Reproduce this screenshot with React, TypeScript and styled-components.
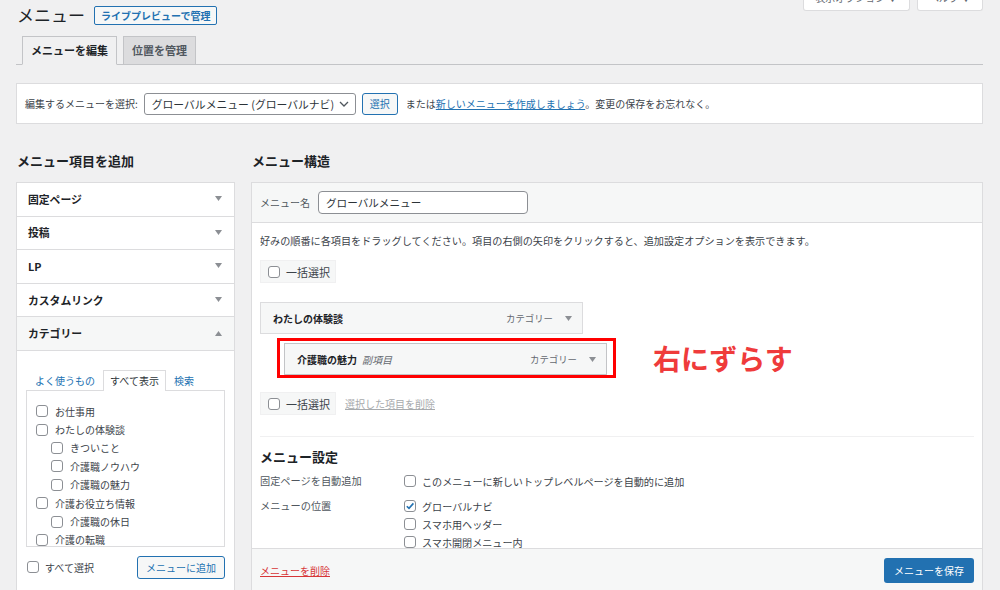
import styled, { createGlobalStyle } from "styled-components";

const GlobalStyle = createGlobalStyle`
  body {
    margin: 0;
    background: #f0f0f1;
    font-family: "Noto Sans CJK JP", "Noto Sans", sans-serif;
    color: #3c434a;
    overflow: hidden;
  }
  * {
    box-sizing: border-box;
  }
`;

const Page = styled.div`
  height: 590px;
  overflow: hidden;
  padding: 0 17px 0 16px;
`;

const Header = styled.div`
  display: flex;
  align-items: center;
  height: 30px;
  padding-left: 1px;
`;

const Title = styled.h1`
  margin: 0;
  font-size: 17px;
  font-weight: 400;
  line-height: 28px;
  color: #1d2327;
`;

const LiveButton = styled.span`
  margin-left: 9px;
  height: 19px;
  padding: 0 6px;
  border: 1px solid #2271b1;
  border-radius: 2px;
  background: #f6f7f7;
  color: #2271b1;
  font-size: 10px;
  font-weight: 600;
  line-height: 17px;
`;

const ScreenMeta = styled.div`
  display: flex;
  gap: 7px;
  margin-left: auto;
  align-self: flex-start;
  margin-top: -10px;
`;

const MetaButton = styled.span<{ $w: number }>`
  width: ${(p) => p.$w}px;
  height: 21px;
  border: 1px solid #dcdcde;
  border-top: none;
  border-radius: 0 0 3px 3px;
  background: #fff;
  color: #646970;
  font-size: 10px;
  line-height: 16px;
  text-align: center;
`;

const TabRow = styled.div`
  display: flex;
  gap: 6px;
  margin-top: 6px;
  padding-left: 6px;
  border-bottom: 1px solid #c3c4c7;
`;

const Tab = styled.span<{ $active?: boolean }>`
  height: 29px;
  margin-bottom: -1px;
  padding: 0 8px;
  border: 1px solid #c3c4c7;
  border-bottom-color: ${(p) => (p.$active ? "#f0f0f1" : "#c3c4c7")};
  background: ${(p) => (p.$active ? "#f0f0f1" : "#dcdcde")};
  color: ${(p) => (p.$active ? "#1d2327" : "#50575e")};
  font-size: 11px;
  font-weight: 700;
  line-height: 27px;
`;

const SelectBar = styled.div`
  display: flex;
  align-items: center;
  height: 41px;
  margin-top: 18px;
  padding: 0 8px;
  background: #fff;
  border: 1px solid #dcdcde;
  font-size: 10px;
  color: #3c434a;
`;

const FakeSelect = styled.div`
  display: flex;
  align-items: center;
  justify-content: space-between;
  width: 212px;
  height: 22px;
  margin-left: 6px;
  padding: 0 6px 0 7px;
  border: 1px solid #8c8f94;
  border-radius: 3px;
  color: #2c3338;
  font-size: 10.8px;
`;

const SecondaryButton = styled.span<{ $w?: number; $h?: number }>`
  display: inline-flex;
  align-items: center;
  justify-content: center;
  width: ${(p) => (p.$w ? `${p.$w}px` : "auto")};
  height: ${(p) => p.$h ?? 22}px;
  border: 1px solid #2271b1;
  border-radius: 3px;
  background: #f6f7f7;
  color: #2271b1;
  font-size: 10px;
`;

const Link = styled.a<{ $color?: string }>`
  color: ${(p) => p.$color ?? "#2271b1"};
  text-decoration: underline;
`;

const Columns = styled.div`
  display: flex;
  gap: 16px;
  margin-top: 27px;
`;

const LeftCol = styled.div`
  width: 219px;
  flex-shrink: 0;
`;

const RightCol = styled.div`
  flex: 1;
`;

const Heading = styled.h2`
  margin: 0 0 11px 1px;
  font-size: 13px;
  font-weight: 700;
  line-height: 20px;
  color: #1d2327;
`;

const Accordion = styled.div`
  background: #fff;
  border: 1px solid #dcdcde;
`;

const AccRow = styled.div<{ $open?: boolean }>`
  display: flex;
  align-items: center;
  justify-content: space-between;
  height: 33.6px;
  padding: 0 12px 1px 11px;
  border-bottom: 1px solid #dcdcde;
  background: ${(p) => (p.$open ? "#f6f7f7" : "#fff")};
  color: #1d2327;
  font-size: 10.8px;
  font-weight: 700;
`;

const AccBody = styled.div`
  padding: 19px 9px 0 9px;
  height: 260px;
`;

const CatTabs = styled.div`
  display: flex;
  align-items: flex-end;
  gap: 7px;
  padding-left: 8px;
  font-size: 10px;
`;

const CatTab = styled.span<{ $active?: boolean }>`
  position: relative;
  height: 21px;
  margin-bottom: -1px;
  padding: 0 ${(p) => (p.$active ? "6px" : "0")};
  border: ${(p) => (p.$active ? "1px solid #dcdcde" : "1px solid transparent")};
  border-bottom: none;
  background: ${(p) => (p.$active ? "#fff" : "transparent")};
  color: ${(p) => (p.$active ? "#2c3338" : "#2271b1")};
  line-height: 20px;
`;

const CatList = styled.div`
  height: 157px;
  padding: 11px 0 0 9px;
  border: 1px solid #dcdcde;
  overflow: hidden;
`;

const CheckRow = styled.label<{ $level?: number; $h?: number; $size?: number; $gap?: number }>`
  display: flex;
  align-items: center;
  gap: ${(p) => p.$gap ?? 7}px;
  height: ${(p) => p.$h ?? 18.4}px;
  padding-left: ${(p) => (p.$level ?? 0) * 15}px;
  font-size: ${(p) => p.$size ?? 10}px;
  color: #3c434a;
`;

const Box = styled.span`
  display: inline-flex;
  align-items: center;
  justify-content: center;
  width: 12px;
  height: 12px;
  flex-shrink: 0;
  border: 1px solid #8c8f94;
  border-radius: 3px;
  background: #fff;
`;

const AddRow = styled.div`
  display: flex;
  align-items: center;
  justify-content: space-between;
  margin-top: 9px;
  padding-left: 1px;
`;

const StructBox = styled.div`
  background: #fff;
  border: 1px solid #dcdcde;
`;

const StructHeader = styled.div`
  display: flex;
  align-items: center;
  gap: 8px;
  height: 40px;
  padding: 0 8px;
  background: #f6f7f7;
  border-bottom: 1px solid #dcdcde;
  font-size: 10px;
  color: #50575e;
`;

const NameInput = styled.div`
  width: 210px;
  height: 23px;
  padding: 0 7px;
  border: 1px solid #8c8f94;
  border-radius: 4px;
  background: #fff;
  color: #2c3338;
  font-size: 10.6px;
  line-height: 21px;
`;

const StructBody = styled.div`
  height: 325px;
  padding: 8px 8px 0 8px;
  overflow: hidden;
`;

const Instruction = styled.p`
  margin: 0;
  font-size: 10.15px;
  line-height: 20px;
  color: #3c434a;
`;

const BulkRow = styled.div<{ $mt: number }>`
  display: flex;
  align-items: center;
  gap: 9px;
  margin-top: ${(p) => p.$mt}px;
  font-size: 10px;
`;

const BulkButton = styled.span`
  display: flex;
  align-items: center;
  gap: 6px;
  width: 76px;
  height: 23px;
  padding-left: 7px;
  background: #f6f7f7;
  border: 1px solid #f0f0f1;
  font-size: 11px;
  color: #3c434a;
`;

const MenuItem = styled.div<{ $sub?: boolean }>`
  display: flex;
  align-items: center;
  width: 323px;
  height: 32px;
  padding: 0 10px 0 12px;
  background: #f6f7f7;
  border: 1px solid ${(p) => (p.$sub ? "#c3c4c7" : "#dcdcde")};
  font-size: 10px;
`;

const ItemTitle = styled.span`
  font-weight: 700;
  color: #1d2327;
`;

const ItemSub = styled.span`
  margin-left: 5px;
  font-style: italic;
  color: #646970;
`;

const ItemType = styled.span`
  margin-left: auto;
  margin-right: 12px;
  font-size: 9.4px;
  color: #646970;
`;

const HighlightRow = styled.div`
  display: flex;
  align-items: center;
  margin-top: 4px;
`;

const RedFrame = styled.div`
  margin-left: 17px;
  padding: 2px 6px 0 4px;
  border: 3px solid #ff0000;
`;

const Annotation = styled.span`
  margin-left: 37px;
  font-size: 28px;
  font-weight: 700;
  line-height: 1;
  color: #ef3b3b;
`;

const Divider = styled.div`
  margin-top: 21px;
  border-top: 1px solid #f0f0f1;
`;

const SubHeading = styled.h3`
  margin: 10px 0 0;
  font-size: 13px;
  font-weight: 700;
  line-height: 20px;
  color: #1d2327;
`;

const SettingsGrid = styled.div`
  display: grid;
  grid-template-columns: 144px 1fr;
  row-gap: 7px;
  margin-top: 5px;
`;

const SettingLabel = styled.span`
  font-size: 10.2px;
  line-height: 18px;
  color: #50575e;
`;

const Footer = styled.div`
  display: flex;
  align-items: center;
  justify-content: space-between;
  height: 42px;
  padding: 1px 8px 0 8px;
  background: #f6f7f7;
  border-top: 1px solid #dcdcde;
  font-size: 10px;
`;

const PrimaryButton = styled.span`
  display: flex;
  align-items: center;
  justify-content: center;
  width: 90px;
  height: 25px;
  border-radius: 3px;
  background: #2271b1;
  color: #fff;
  font-size: 10px;
`;

function Arrow({ up }: { up?: boolean }) {
  return (
    <svg width="7" height="5" viewBox="0 0 7 5">
      <path d={up ? "M0 5h7L3.5 0z" : "M0 0h7L3.5 5z"} fill="#8c8f94" />
    </svg>
  );
}

function Check({ checked }: { checked?: boolean }) {
  return (
    <Box>
      {checked && (
        <svg width="10" height="10" viewBox="0 0 10 10">
          <path d="M1.8 5.2l2.2 2.2 4.4-5" fill="none" stroke="#2271b1" strokeWidth="1.6" />
        </svg>
      )}
    </Box>
  );
}

const categories = [
  { label: "お仕事用", level: 0 },
  { label: "わたしの体験談", level: 0 },
  { label: "きついこと", level: 1 },
  { label: "介護職ノウハウ", level: 1 },
  { label: "介護職の魅力", level: 1 },
  { label: "介護お役立ち情報", level: 0 },
  { label: "介護職の休日", level: 1 },
  { label: "介護の転職", level: 0 },
];

const panels = ["固定ページ", "投稿", "LP", "カスタムリンク"];

const locations = [
  { label: "グローバルナビ", checked: true },
  { label: "スマホ用ヘッダー", checked: false },
  { label: "スマホ開閉メニュー内", checked: false },
];

export default function App() {
  return (
    <>
      <GlobalStyle />
      <Page>
        <Header>
          <Title>メニュー</Title>
          <LiveButton>ライブプレビューで管理</LiveButton>
          <ScreenMeta>
            <MetaButton $w={107}>表示オプション ▼</MetaButton>
            <MetaButton $w={66}>ヘルプ ▼</MetaButton>
          </ScreenMeta>
        </Header>
        <TabRow>
          <Tab $active>メニューを編集</Tab>
          <Tab>位置を管理</Tab>
        </TabRow>
        <SelectBar>
          <span>編集するメニューを選択:</span>
          <FakeSelect>
            <span>グローバルメニュー (グローバルナビ)</span>
            <svg width="10" height="6" viewBox="0 0 10 6">
              <path d="M1 1l4 4 4-4" fill="none" stroke="#50575e" strokeWidth="1.3" />
            </svg>
          </FakeSelect>
          <SecondaryButton $w={36} style={{ marginLeft: 6 }}>
            選択
          </SecondaryButton>
          <span style={{ marginLeft: 8 }}>
            または<Link>新しいメニューを作成しましょう</Link>。変更の保存をお忘れなく。
          </span>
        </SelectBar>
        <Columns>
          <LeftCol>
            <Heading>メニュー項目を追加</Heading>
            <Accordion>
              {panels.map((p) => (
                <AccRow key={p}>
                  {p}
                  <Arrow />
                </AccRow>
              ))}
              <AccRow $open>
                カテゴリー
                <Arrow up />
              </AccRow>
              <AccBody>
                <CatTabs>
                  <CatTab>よく使うもの</CatTab>
                  <CatTab $active>すべて表示</CatTab>
                  <CatTab>検索</CatTab>
                </CatTabs>
                <CatList>
                  {categories.map((c) => (
                    <CheckRow key={c.label} $level={c.level}>
                      <Check />
                      {c.label}
                    </CheckRow>
                  ))}
                </CatList>
                <AddRow>
                  <CheckRow $h={23} $gap={6}>
                    <Check />
                    すべて選択
                  </CheckRow>
                  <SecondaryButton $w={88} $h={23}>
                    メニューに追加
                  </SecondaryButton>
                </AddRow>
              </AccBody>
            </Accordion>
          </LeftCol>
          <RightCol>
            <Heading>メニュー構造</Heading>
            <StructBox>
              <StructHeader>
                <span>メニュー名</span>
                <NameInput>グローバルメニュー</NameInput>
              </StructHeader>
              <StructBody>
                <Instruction>
                  好みの順番に各項目をドラッグしてください。項目の右側の矢印をクリックすると、追加設定オプションを表示できます。
                </Instruction>
                <BulkRow $mt={9}>
                  <BulkButton>
                    <Check />
                    一括選択
                  </BulkButton>
                </BulkRow>
                <MenuItem style={{ marginTop: 19 }}>
                  <ItemTitle>わたしの体験談</ItemTitle>
                  <ItemType>カテゴリー</ItemType>
                  <Arrow />
                </MenuItem>
                <HighlightRow>
                  <RedFrame>
                    <MenuItem $sub>
                      <ItemTitle>介護職の魅力</ItemTitle>
                      <ItemSub>副項目</ItemSub>
                      <ItemType>カテゴリー</ItemType>
                      <Arrow />
                    </MenuItem>
                  </RedFrame>
                  <Annotation>右にずらす</Annotation>
                </HighlightRow>
                <BulkRow $mt={14}>
                  <BulkButton>
                    <Check />
                    一括選択
                  </BulkButton>
                  <Link $color="#a7aaad">選択した項目を削除</Link>
                </BulkRow>
                <Divider />
                <SubHeading>メニュー設定</SubHeading>
                <SettingsGrid>
                  <SettingLabel>固定ページを自動追加</SettingLabel>
                  <CheckRow $size={10.1} $h={18} $gap={6}>
                    <Check />
                    このメニューに新しいトップレベルページを自動的に追加
                  </CheckRow>
                  <SettingLabel>メニューの位置</SettingLabel>
                  <div>
                    {locations.map((l) => (
                      <CheckRow key={l.label} $size={10.1} $h={18} $gap={6}>
                        <Check checked={l.checked} />
                        {l.label}
                      </CheckRow>
                    ))}
                  </div>
                </SettingsGrid>
              </StructBody>
              <Footer>
                <Link $color="#d63638">メニューを削除</Link>
                <PrimaryButton>メニューを保存</PrimaryButton>
              </Footer>
            </StructBox>
          </RightCol>
        </Columns>
      </Page>
    </>
  );
}
